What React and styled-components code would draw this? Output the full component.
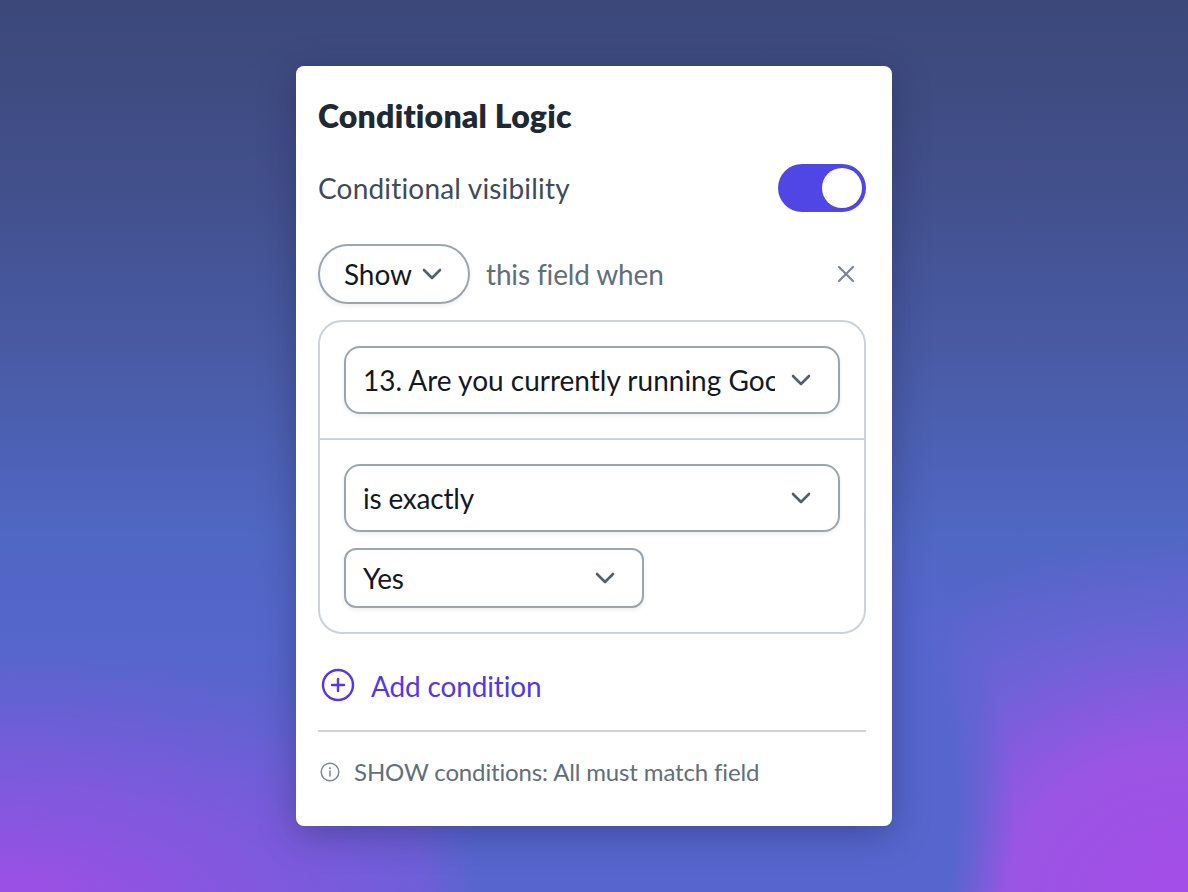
import React from "react";
import styled, { createGlobalStyle } from "styled-components";

const GlobalStyle = createGlobalStyle`
  html, body {
    margin: 0;
    padding: 0;
    height: 100%;
  }
  body {
    font-family: "Lato", "Liberation Sans", sans-serif;
  }
`;

const Page = styled.div`
  box-sizing: border-box;
  width: 1188px;
  height: 892px;
  overflow: hidden;
  padding-top: 66px;
  display: flex;
  justify-content: center;
  align-items: flex-start;
  background:
    radial-gradient(ellipse 300px 380px at 715px 810px, rgba(86, 102, 206, 1) 0%, rgba(86, 102, 206, 1) 80%, rgba(86, 102, 206, 0) 100%),
    radial-gradient(ellipse 440px 370px at 1188px 905px, #a54ce8 0%, #9a55e4 42%, rgba(125, 95, 222, 0.6) 72%, rgba(110, 100, 215, 0) 100%),
    radial-gradient(ellipse 560px 250px at 0px 905px, #a04ee6 0%, rgba(140, 85, 226, 0.75) 45%, rgba(110, 95, 218, 0) 100%),
    linear-gradient(180deg, #3c4879 0%, #42508d 22%, #4a5ca8 42%, #5067c3 60%, #5666cc 72%, #6262d4 100%);
`;

const Card = styled.div`
  box-sizing: border-box;
  width: 596px;
  height: 760px;
  background: #fff;
  border-radius: 8px;
  padding: 31px 26px 0 22px;
  box-shadow: 0 8px 36px rgba(25, 30, 70, 0.36);
  display: flex;
  flex-direction: column;
`;

const Title = styled.h1`
  margin: 0;
  font-size: 32px;
  line-height: 38px;
  font-weight: 800;
  letter-spacing: 0.2px;
  color: #1f2933;
`;

const VisibilityRow = styled.div`
  display: flex;
  justify-content: space-between;
  align-items: center;
  margin-top: 29px;
  font-size: 28px;
  letter-spacing: 0.18px;
  color: #3e4c59;
`;

const Toggle = styled.div`
  box-sizing: border-box;
  width: 88px;
  height: 48px;
  border-radius: 24px;
  background: #4f46e5;
  padding: 4px;
  display: flex;
  justify-content: flex-end;
`;

const Knob = styled.div`
  width: 40px;
  height: 40px;
  border-radius: 50%;
  background: #fff;
`;

const WhenRow = styled.div`
  display: flex;
  align-items: center;
  margin-top: 32px;
`;

const Pill = styled.div`
  box-sizing: border-box;
  width: 152px;
  height: 60px;
  border: 2px solid #9aa5b1;
  border-radius: 30px;
  padding-left: 24px;
  display: flex;
  align-items: center;
  gap: 10px;
  font-size: 28px;
  letter-spacing: -0.1px;
  color: #14191f;
  box-shadow: 0 2px 4px rgba(31, 41, 51, 0.08);
`;

const WhenText = styled.span`
  margin-left: 16px;
  font-size: 28px;
  letter-spacing: -0.15px;
  color: #616e7c;
  flex: 1;
`;

const CloseButton = styled.span`
  display: flex;
  margin-right: 8px;
  color: #7b8794;
`;

const Group = styled.div`
  box-sizing: border-box;
  height: 314px;
  margin-top: 16px;
  border: 2px solid #cbd2d9;
  border-radius: 24px;
  display: flex;
  flex-direction: column;
`;

const GroupTop = styled.div`
  padding: 24px;
  border-bottom: 2px solid #cbd2d9;
`;

const GroupBottom = styled.div`
  padding: 24px 24px 0;
  display: flex;
  flex-direction: column;
  gap: 16px;
  align-items: flex-start;
`;

const Select = styled.div`
  box-sizing: border-box;
  width: ${(p) => (p.$small ? "300px" : "496px")};
  height: ${(p) => (p.$small ? "60px" : "68px")};
  border: 2px solid #9aa5b1;
  border-radius: ${(p) => (p.$small ? "12px" : "16px")};
  padding: 0 27px 0 17px;
  display: flex;
  align-items: center;
  justify-content: space-between;
  font-size: 28px;
  letter-spacing: -0.2px;
  color: #14191f;
  box-shadow: 0 2px 4px rgba(31, 41, 51, 0.08);
`;

const SelectText = styled.span`
  display: block;
  width: 412px;
  overflow: hidden;
  white-space: nowrap;
  letter-spacing: 0;
`;

const Chevron = styled.svg`
  flex: none;
  color: #52606d;
`;

const AddRow = styled.div`
  display: flex;
  align-items: center;
  gap: 16px;
  margin-top: 35px;
  padding-left: 3px;
  font-size: 28px;
  letter-spacing: -0.15px;
  color: #5438e8;
`;

const AddIcon = styled.svg`
  transform: translateY(-1px);
`;

const Rule = styled.hr`
  width: 100%;
  margin: 27px 0 0;
  border: 0;
  border-top: 2px solid #cfd3d8;
`;

const InfoRow = styled.div`
  display: flex;
  align-items: center;
  gap: 14px;
  margin-top: 25px;
  padding-left: 2px;
  font-size: 24px;
  letter-spacing: -0.14px;
  color: #616e7c;
`;

const ChevronIcon = () => (
  <Chevron width="20" height="12" viewBox="0 0 20 12" fill="none">
    <path d="M2 2l8 8 8-8" stroke="currentColor" strokeWidth="2.6" strokeLinecap="round" strokeLinejoin="round" />
  </Chevron>
);

const App = () => {
  return (
    <Page>
      <GlobalStyle />
      <Card>
        <Title>Conditional Logic</Title>
        <VisibilityRow>
          Conditional visibility
          <Toggle>
            <Knob />
          </Toggle>
        </VisibilityRow>
        <WhenRow>
          <Pill>
            Show
            <ChevronIcon />
          </Pill>
          <WhenText>this field when</WhenText>
          <CloseButton>
            <svg width="24" height="24" viewBox="0 0 24 24" fill="none">
              <path d="M5 5l14 14M19 5L5 19" stroke="currentColor" strokeWidth="2.2" strokeLinecap="round" />
            </svg>
          </CloseButton>
        </WhenRow>
        <Group>
          <GroupTop>
            <Select>
              <SelectText>13. Are you currently running Google Ads?</SelectText>
              <ChevronIcon />
            </Select>
          </GroupTop>
          <GroupBottom>
            <Select>
              is exactly
              <ChevronIcon />
            </Select>
            <Select $small>
              Yes
              <ChevronIcon />
            </Select>
          </GroupBottom>
        </Group>
        <AddRow>
          <AddIcon width="34" height="34" viewBox="0 0 34 34" fill="none">
            <circle cx="17" cy="17" r="15" stroke="currentColor" strokeWidth="2.4" />
            <path d="M17 11v12M11 17h12" stroke="currentColor" strokeWidth="2.4" strokeLinecap="round" />
          </AddIcon>
          Add condition
        </AddRow>
        <Rule />
        <InfoRow>
          <svg width="20" height="20" viewBox="0 0 20 20" fill="none">
            <circle cx="10" cy="10" r="8.8" stroke="#7b8794" strokeWidth="1.5" />
            <path d="M10 9v5" stroke="#7b8794" strokeWidth="1.5" strokeLinecap="round" />
            <circle cx="10" cy="6.2" r="1" fill="#7b8794" />
          </svg>
          SHOW conditions: All must match field
        </InfoRow>
      </Card>
    </Page>
  );
};

export default App;
